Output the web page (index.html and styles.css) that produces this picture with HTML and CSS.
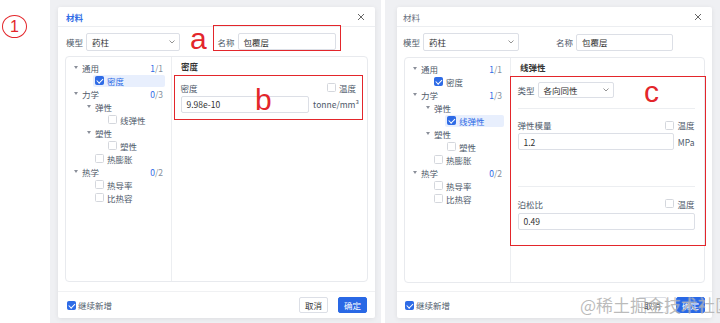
FILE: index.html
```html
<!DOCTYPE html>
<html lang="zh">
<head>
<meta charset="UTF-8">
<title>材料</title>
<link rel="stylesheet" href="styles.css">
</head>
<body>
<div class="page">
  <div class="marker"><span class="num">1</span></div>

  <!-- 左：密度 -->
  <div class="shot shot-left">
    <div class="dialog">
      <div class="dlg-head">
        <span class="dlg-title blue">材料</span>
        <svg class="close" width="8" height="8" viewBox="0 0 8 8"><path d="M1 1L7 7M7 1L1 7" stroke="#666" stroke-width="1"/></svg>
      </div>
      <div class="form-row">
        <div class="field"><label>模型</label><div class="select sel-model">药柱<svg width="6" height="4" viewBox="0 0 6 4"><path d="M0.5 0.5L3 3L5.5 0.5" fill="none" stroke="#888" stroke-width="0.9"/></svg></div></div>
        <span class="mark mark-a">a</span>
        <div class="field hl hl-a"><label>名称</label><div class="input inp-name">包覆层</div></div>
      </div>
      <div class="panel">
        <ul class="tree">
          <li class="row l0"><i class="caret"></i><span class="node">通用</span><span class="count"><b>1</b>/1</span></li>
          <li class="row l1"><i class="caret none"></i><span class="node sel"><i class="cb on"></i>密度</span></li>
          <li class="row l0"><i class="caret"></i><span class="node">力学</span><span class="count"><b>0</b>/3</span></li>
          <li class="row l1"><i class="caret"></i><span class="node">弹性</span></li>
          <li class="row l2"><i class="caret none"></i><span class="node"><i class="cb"></i>线弹性</span></li>
          <li class="row l1"><i class="caret"></i><span class="node">塑性</span></li>
          <li class="row l2"><i class="caret none"></i><span class="node"><i class="cb"></i>塑性</span></li>
          <li class="row l1"><i class="caret none"></i><span class="node"><i class="cb"></i>热膨胀</span></li>
          <li class="row l0"><i class="caret"></i><span class="node">热学</span><span class="count"><b>0</b>/2</span></li>
          <li class="row l1"><i class="caret none"></i><span class="node"><i class="cb"></i>热导率</span></li>
          <li class="row l1"><i class="caret none"></i><span class="node"><i class="cb"></i>比热容</span></li>
        </ul>
        <div class="content">
          <div class="sec-title">密度</div>
          <div class="hl hl-b">
            <span class="mark mark-b">b</span>
            <div class="field-head"><span>密度</span><span class="temp"><i class="cb"></i>温度</span></div>
            <div class="field-input"><div class="input">9.98e-10</div><span class="unit">tonne/mm³</span></div>
          </div>
        </div>
      </div>
      <div class="dlg-foot">
        <span class="keep"><i class="cb on"></i>继续新增</span>
        <div class="btns"><button class="btn">取消</button><button class="btn primary">确定</button></div>
      </div>
    </div>
  </div>

  <!-- 右：线弹性 -->
  <div class="shot shot-right">
    <div class="dialog">
      <div class="dlg-head head-right">
        <span class="dlg-title">材料</span>
        <svg class="close" width="8" height="8" viewBox="0 0 8 8"><path d="M1 1L7 7M7 1L1 7" stroke="#666" stroke-width="1"/></svg>
      </div>
      <div class="form-row row-right">
        <div class="field"><label>模型</label><div class="select sel-model-r">药柱<svg width="6" height="4" viewBox="0 0 6 4"><path d="M0.5 0.5L3 3L5.5 0.5" fill="none" stroke="#888" stroke-width="0.9"/></svg></div></div>
        <div class="field name-r"><label>名称</label><div class="input inp-name-r">包覆层</div></div>
      </div>
      <div class="panel panel-right">
        <ul class="tree">
          <li class="row l0"><i class="caret"></i><span class="node">通用</span><span class="count"><b>1</b>/1</span></li>
          <li class="row l1"><i class="caret none"></i><span class="node"><i class="cb on"></i>密度</span></li>
          <li class="row l0"><i class="caret"></i><span class="node">力学</span><span class="count"><b>1</b>/3</span></li>
          <li class="row l1"><i class="caret"></i><span class="node">弹性</span></li>
          <li class="row l2"><i class="caret none"></i><span class="node sel"><i class="cb on"></i>线弹性</span></li>
          <li class="row l1"><i class="caret"></i><span class="node">塑性</span></li>
          <li class="row l2"><i class="caret none"></i><span class="node"><i class="cb"></i>塑性</span></li>
          <li class="row l1"><i class="caret none"></i><span class="node"><i class="cb"></i>热膨胀</span></li>
          <li class="row l0"><i class="caret"></i><span class="node">热学</span><span class="count"><b>0</b>/2</span></li>
          <li class="row l1"><i class="caret none"></i><span class="node"><i class="cb"></i>热导率</span></li>
          <li class="row l1"><i class="caret none"></i><span class="node"><i class="cb"></i>比热容</span></li>
        </ul>
        <div class="content">
          <div class="sec-title">线弹性</div>
          <div class="hl hl-c">
            <span class="mark mark-c">c</span>
            <div class="item item-type">
              <div class="field"><label>类型</label><div class="select sel-type">各向同性<svg width="6" height="4" viewBox="0 0 6 4"><path d="M0.5 0.5L3 3L5.5 0.5" fill="none" stroke="#888" stroke-width="0.9"/></svg></div></div>
            </div>
            <div class="item item-mod">
              <div class="field-head"><span>弹性模量</span><span class="temp"><i class="cb"></i>温度</span></div>
              <div class="field-input"><div class="input">1.2</div><span class="unit">MPa</span></div>
            </div>
            <div class="item item-pois">
              <div class="field-head"><span>泊松比</span><span class="temp"><i class="cb"></i>温度</span></div>
              <div class="field-input"><div class="input">0.49</div></div>
            </div>
          </div>
        </div>
      </div>
      <div class="dlg-foot foot-right">
        <span class="keep"><i class="cb on"></i>继续新增</span>
        <div class="btns"><button class="btn">取消</button><button class="btn primary">确定</button></div>
      </div>
    </div>
  </div>

  <div class="watermark">@稀土掘金技术社区</div>
</div>
</body>
</html>
```

FILE: styles.css
```css
* {
  box-sizing: border-box;
}
body {
  margin: 0;
  font-family: "Noto Sans CJK SC", "Noto Sans", sans-serif;
  font-size: 8.5px;
  color: #4e5969;
  background: #fff;
}
.page {
  display: flex;
  width: 720px;
  height: 323px;
  overflow: hidden;
  position: relative;
}
.marker {
  width: 50px;
  flex: none;
  padding: 15px 0 0 2px;
}
.num {
  display: flex;
  align-items: center;
  justify-content: center;
  width: 25px;
  height: 23px;
  border: 1.5px solid #e3262b;
  border-radius: 50%;
  color: #e3262b;
  font: 16px "Liberation Sans", sans-serif;
}

/* 截图背景 */
.shot {
  background: #eff0f3;
  height: 323px;
  flex: none;
}
.shot-left {
  width: 331px;
  padding: 7px 6px 0 8px;
}
.shot-right {
  width: 335px;
  margin-left: 4px;
  padding: 7px 8px 0 12px;
}
.dialog {
  background: #fff;
  height: 311px;
  border-radius: 2px;
  box-shadow: 0 1px 5px rgba(0, 0, 0, 0.08);
  display: flex;
  flex-direction: column;
}
.dlg-head {
  height: 20px;
  flex: none;
  border-bottom: 1px solid #eceef1;
  display: flex;
  align-items: center;
  justify-content: space-between;
  padding: 0 10px 0 8px;
}
.head-right {
  padding-left: 6px;
}
.dlg-title {
  font-size: 8.5px;
  color: #6b7280;
}
.dlg-title.blue {
  color: #2e6be6;
  font-weight: bold;
}

/* 模型 / 名称 */
.form-row {
  display: flex;
  align-items: flex-end;
  height: 18px;
  flex: none;
  margin-top: 6px;
  padding-left: 8px;
}
.row-right {
  padding-left: 6px;
}
.field {
  display: flex;
  align-items: center;
}
.field label {
  width: 17px;
  margin-right: 3px;
  color: #4e5969;
  white-space: nowrap;
}
.select {
  height: 18px;
  border: 1px solid #dcdfe6;
  border-radius: 2px;
  padding: 0 4px 0 5px;
  display: flex;
  align-items: center;
  justify-content: space-between;
  color: #333;
}
.sel-model { width: 94px; }
.sel-model-r { width: 96px; }
.sel-type { width: 76px; height: 16px; }
.input {
  height: 17px;
  border: 1px solid #dcdfe6;
  border-radius: 2px;
  padding: 0 5px;
  display: flex;
  align-items: center;
  color: #333;
}
.inp-name { width: 98px; }
.inp-name-r { width: 97px; }
.name-r {
  margin-left: 37px;
  margin-bottom: 0.5px;
}

/* 红色标注 */
.hl {
  border: 1.5px solid #e3262b;
  position: relative;
}
.mark {
  font: 30px/24px "Liberation Sans", sans-serif;
  color: #e3262b;
}
.mark-a {
  margin-left: 10px;
  width: 23px;
}
.hl-a {
  padding: 7.5px 4.5px 0 3.5px;
}
.mark-b,
.mark-c {
  position: absolute;
  line-height: 30px;
}
.mark-b {
  left: 80px;
  top: 8.5px;
}
.mark-c {
  left: 133px;
  top: 0;
}

/* 面板 */
.panel {
  display: flex;
  height: 226px;
  flex: none;
  margin: 5px 7px 0;
  border: 1px solid #e8eaee;
  border-radius: 4px;
}
.panel-right {
  margin-top: 6px;
}
.tree {
  width: 106px;
  flex: none;
  border-right: 1px solid #eceef1;
  list-style: none;
  margin: 0;
  padding: 4px 6px 0 0;
}
.row {
  display: flex;
  align-items: center;
  height: 13px;
}
.l0 { padding-left: 8px; }
.l1 { padding-left: 21px; }
.l2 { padding-left: 34px; }
.caret {
  width: 8px;
  flex: none;
  display: flex;
  align-items: center;
}
.caret::before {
  content: "";
  border-left: 2.5px solid transparent;
  border-right: 2.5px solid transparent;
  border-top: 3px solid #8a8f99;
}
.caret.none::before {
  display: none;
}
.node {
  flex: 1;
  display: flex;
  align-items: center;
  height: 12px;
  padding-left: 2px;
  margin-left: -2px;
  border-radius: 2px;
  white-space: nowrap;
}
.node.sel {
  background: #e8effd;
  color: #2e6be6;
}
.cb {
  width: 9px;
  height: 9px;
  flex: none;
  margin-right: 3px;
  border: 1px solid #d4d7dd;
  border-radius: 1.5px;
  background: #fff;
  position: relative;
}
.cb.on {
  background: #2e6be6;
  border-color: #2e6be6;
}
.cb.on::after {
  content: "";
  position: absolute;
  left: 2.3px;
  top: 0.4px;
  width: 2.5px;
  height: 4.8px;
  border: solid #fff;
  border-width: 0 1.3px 1.3px 0;
  transform: rotate(45deg);
}
.count {
  margin-left: auto;
  padding-right: 2px;
  color: #86909c;
}
.count b {
  font-weight: normal;
  color: #2e6be6;
}

/* 右侧内容 */
.content {
  flex: 1;
  min-width: 0;
  padding: 3px 4px 0 2px;
}
.sec-title {
  font-weight: bold;
  font-size: 8.5px;
  line-height: 13px;
  padding-left: 7px;
  color: #333;
}
.hl-b {
  margin-top: 2px;
  padding: 6px 3px 6px 5.5px;
}
.field-head {
  display: flex;
  justify-content: space-between;
  align-items: center;
  height: 11px;
}
.temp {
  display: flex;
  align-items: center;
}
.hl-b .temp {
  margin-right: 3px;
}
.field-input {
  display: flex;
  align-items: center;
  margin-top: 2.5px;
}
.field-input .input {
  flex: 1;
}
.unit {
  margin-left: 4px;
}
.hl-c {
  margin: 2px -6px 0 -3px;
  padding: 0 10.5px 0 6.5px;
  height: 170px;
}
.item {
  border-bottom: 1px solid #eceef1;
}
.item-type {
  padding: 4.5px 0 10px;
}
.item-mod {
  padding: 11px 0 36px;
}
.item-pois {
  border-bottom: none;
  padding: 11px 0 0;
}
.item-pois .field-input {
  margin-top: 3.5px;
}

/* 底部 */
.dlg-foot {
  margin-top: auto;
  height: 27px;
  flex: none;
  border-top: 1px solid #f0f1f3;
  display: flex;
  align-items: center;
  padding: 0 8px 0 9px;
}
.foot-right {
  padding: 0 7px 0 8px;
}
.keep {
  display: flex;
  align-items: center;
}
.keep .cb {
  margin-right: 2px;
}
.btns {
  margin-left: auto;
  display: flex;
  gap: 10px;
}
.foot-right .btns {
  gap: 9px;
}
.btn {
  width: 29px;
  height: 16px;
  padding: 0;
  border: 1px solid #dcdfe6;
  border-radius: 2px;
  background: #fff;
  color: #333;
  font-family: inherit;
  font-size: 8.5px;
  display: flex;
  align-items: center;
  justify-content: center;
}
.btn.primary {
  background: #2968e5;
  border-color: #2968e5;
  color: #fff;
}

.watermark {
  position: absolute;
  left: 580px;
  top: 294px;
  font-size: 17px;
  line-height: 22px;
  color: rgba(120, 120, 120, 0.5);
  text-shadow: 0 0 1px rgba(255, 255, 255, 0.8);
  white-space: nowrap;
}
```
